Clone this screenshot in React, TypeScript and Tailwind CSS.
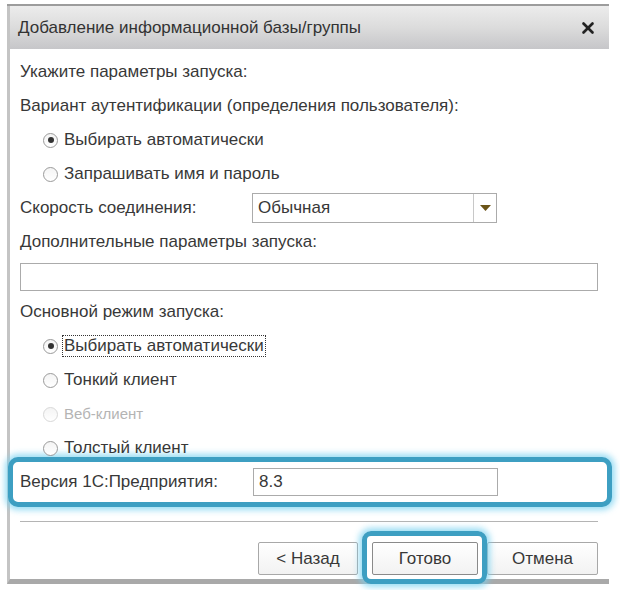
import { X } from "lucide-react";

const FONT = { fontFamily: '"Liberation Sans", Arial, sans-serif' };

type RadioProps = {
  label: string;
  checked?: boolean;
  disabled?: boolean;
  focused?: boolean;
};

const Radio = ({ label, checked, disabled, focused }: RadioProps) => (
  <div className="flex h-[34px] items-center pl-[23px]">
    <span
      className={`flex h-[15px] w-[15px] items-center justify-center rounded-full border bg-gradient-to-b from-[#f4f4f4] to-white ${
        disabled ? "border-[#d8d8d8]" : "border-[#9a9a9a]"
      }`}
    >
      {checked && <span className="h-[6px] w-[6px] rounded-full bg-[#333]" />}
    </span>
    <span
      className={`ml-[5px] px-[1px] leading-[20px] ${
        disabled ? "text-[15px] text-[#b4b4b4]" : "text-[17px] text-[#383838]"
      } ${focused ? "outline-1 outline-dotted outline-[#333]" : ""}`}
    >
      {label}
    </span>
  </div>
);

const Label = ({ children }: { children: React.ReactNode }) => (
  <div className="flex h-[34px] items-center text-[17px] text-[#383838]">
    {children}
  </div>
);

export default function App() {
  return (
    <div className="h-[590px] w-[620px] overflow-hidden bg-white" style={FONT}>
      <div className="ml-[7px] mt-[4px] w-[602px] border-t-2 border-t-[#9c9c9c]">
        {/* Заголовок окна */}
        <div className="flex h-[43px] items-center justify-between border-l-[3px] border-l-[#c4c4c4] bg-gradient-to-b from-[#ececec] via-[#dcdcdc] to-[#c6c6c9] pl-[8px] pr-[12px] pt-[1px]">
          <span className="text-[17px] text-[#333]">
            Добавление информационной базы/группы
          </span>
          <X className="h-[18px] w-[18px] text-[#222]" strokeWidth={3.5} />
        </div>

        {/* Тело диалога */}
        <div className="border-b-[5px] border-l-[3px] border-b-[#a9a9a9] border-l-[#c4c4c4] pb-[4px] pl-[10px] pr-[11px] pt-[6px]">
          <Label>Укажите параметры запуска:</Label>
          <Label>Вариант аутентификации (определения пользователя):</Label>
          <Radio label="Выбирать автоматически" checked />
          <Radio label="Запрашивать имя и пароль" />

          <div className="flex h-[34px] items-center">
            <span className="w-[232px] text-[17px] text-[#383838]">
              Скорость соединения:
            </span>
            <div className="flex h-[30px] w-[245px] items-center border border-[#ababab] bg-white">
              <span className="flex-1 pl-[5px] text-[17px] text-[#383838]">
                Обычная
              </span>
              <span className="flex h-full w-[23px] items-center justify-center border-l border-l-[#c8c8c8]">
                <svg width="11" height="6" viewBox="0 0 11 6">
                  <path d="M0 0h11L5.5 6z" fill="#6b5417" />
                </svg>
              </span>
            </div>
          </div>

          <Label>Дополнительные параметры запуска:</Label>
          <div className="flex h-[36px] items-center">
            <div className="h-[28px] w-full border border-[#ababab] bg-white" />
          </div>

          <Label>Основной режим запуска:</Label>
          <Radio label="Выбирать автоматически" checked focused />
          <Radio label="Тонкий клиент" />
          <Radio label="Веб-клиент" disabled />
          <div className="h-[30px]">
            <Radio label="Толстый клиент" />
          </div>

          {/* Версия платформы, выделена рамкой */}
          <div className="-ml-[12px] -mr-[14px] mt-[-4px] flex h-[50px] items-center rounded-[10px] border-[5px] border-[#3d9fc2] bg-white pl-[7px] shadow-[0_0_6px_3px_rgba(120,210,240,0.75)]">
            <span className="w-[233px] text-[17px] text-[#383838]">
              Версия 1С:Предприятия:
            </span>
            <div className="flex h-[28px] w-[245px] items-center border border-[#ababab] pl-[5px] text-[17px] text-[#383838]">
              8.3
            </div>
          </div>

          <div className="mt-[14px] h-px w-full bg-[#b4b4b4]" />

          <div className="mt-[20px] flex items-center justify-end">
            <button
              type="button"
              className="h-[33px] w-[100px] rounded-[2px] border border-[#a8a8a8] bg-gradient-to-b from-white to-[#f2f2f2] text-[17px] text-[#383838]"
            >
              &lt; Назад
            </button>
            <span className="relative ml-[14px]">
              <button
                type="button"
                className="h-[33px] w-[106px] rounded-[2px] border border-[#8a8a8a] bg-gradient-to-b from-white to-[#f2f2f2] text-[17px] text-[#383838]"
              >
                Готово
              </button>
              <span className="pointer-events-none absolute -bottom-[9px] -left-[10px] -right-[9px] -top-[11px] rounded-[9px] border-[5px] border-[#3d9fc2] shadow-[0_0_6px_3px_rgba(120,210,240,0.75)]" />
            </span>
            <button
              type="button"
              className="ml-[9px] h-[33px] w-[111px] rounded-[2px] border border-[#a8a8a8] bg-gradient-to-b from-white to-[#f2f2f2] text-[17px] text-[#383838]"
            >
              Отмена
            </button>
          </div>
        </div>
      </div>
    </div>
  );
}
